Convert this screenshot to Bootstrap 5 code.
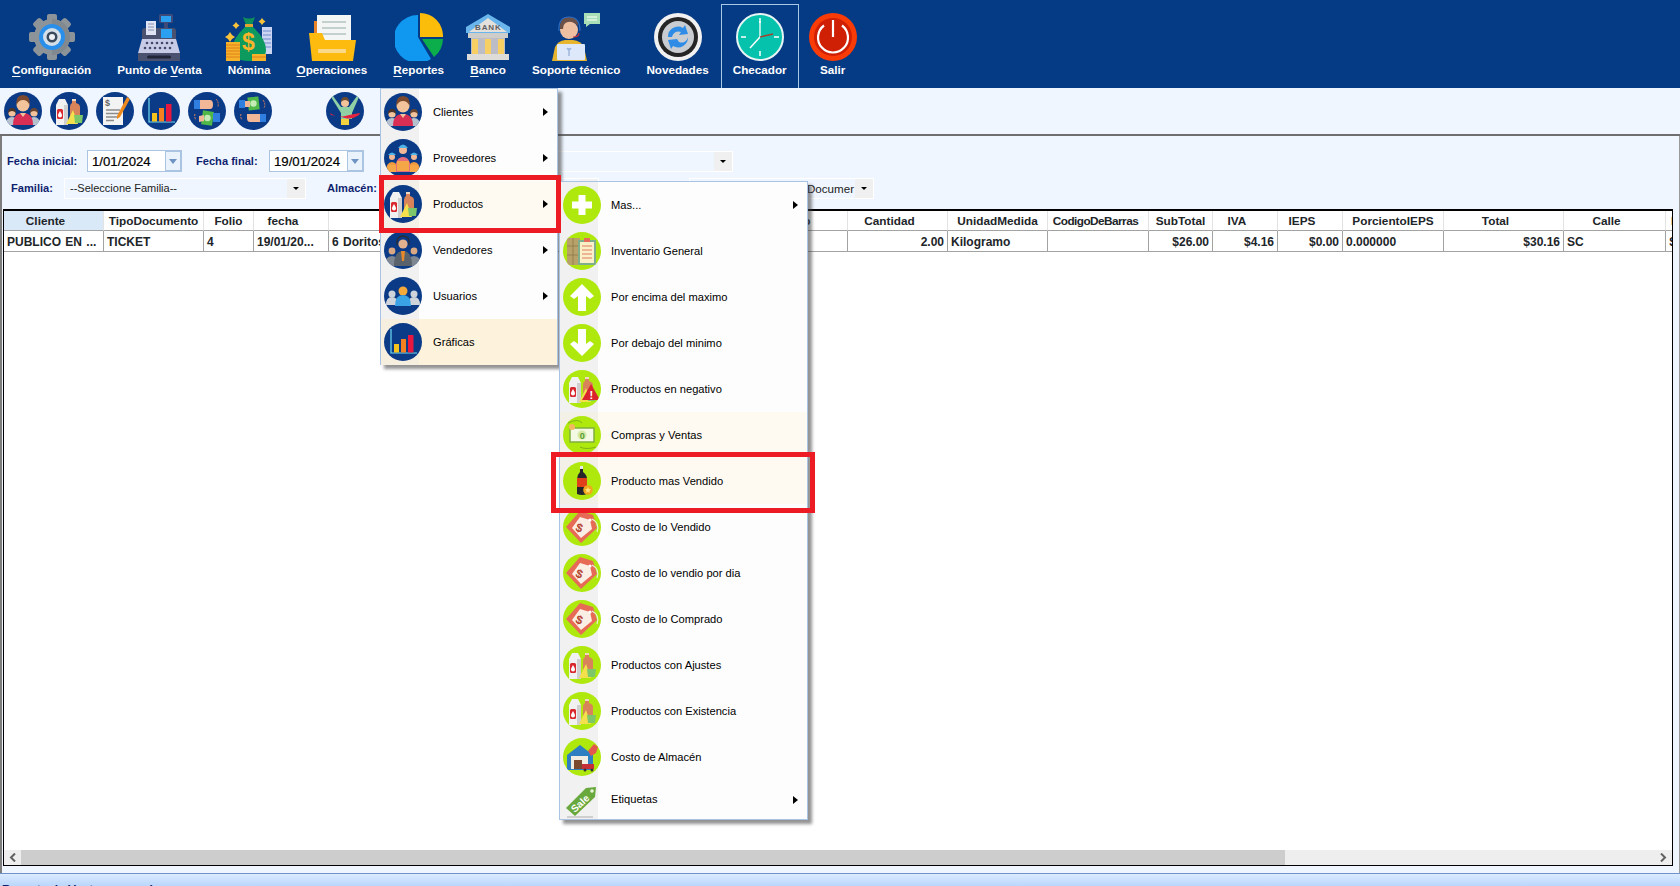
<!DOCTYPE html>
<html lang="es">
<head>
  <meta charset="utf-8">
  <title>Reporte de Ventas general</title>
  <link href="https://cdn.jsdelivr.net/npm/bootstrap@5.3.0/dist/css/bootstrap.min.css" rel="stylesheet">
  <style>
    body {
      width: 1680px;
      height: 886px;
      overflow: hidden;
      background-color: #eff6ff;
      font-family: "Liberation Sans", Arial, sans-serif;
      font-size: 11px;
      color: #000;
    }

    /* top ribbon */
    .ribbon { height: 88px; background-color: #053a85; flex: none; }
    .ribbon-item {
      height: 84px;
      margin-top: 4px;
      padding: 8px 11px 0;
      margin-right: 2px;
      border: 1px solid transparent;
      border-bottom: 0;
      color: #fff;
      font-weight: 700;
      font-size: 11.7px;
      text-decoration: none;
      white-space: nowrap;
    }
    .ribbon-item svg { width: 48px; height: 48px; display: block; margin: 0 -6px 0; flex: none; }
    .ribbon-item svg.wide { width: 60px; }
    .ribbon-item.active { border-color: #a9c8e6; margin-left: -2px; }
    .ribbon-item u { text-underline-offset: 2px; }
    .ribbon-item.salir { margin-left: 2px; }

    /* round icons */
    .rnd { width: 38px; height: 38px; display: block; flex: none; overflow: hidden; }
    .rnd svg { width: 38px; height: 38px; display: block; }
    .navy { background-color: #0b3a87; }
    .lime { background-color: #aee80c; }

    .toolbar { height: 48px; flex: none; padding-left: 4px; gap: 8px; align-items: center; border-bottom: 2px solid #6f6f6f; }
    .toolbar .rnd:nth-child(7) { margin-left: 46px; }

    /* filter panel */
    .workspace { flex: 1 1 auto; min-height: 0; border-left: 2px solid #7d7d7d; border-right: 1px solid #9a9a9a; padding-right: 4px; }
    .filters { height: 73px; flex: none; color: #0f1f70; font-weight: 700; }
    .filter-row { align-items: center; }
    .row-a { height: 22px; margin-top: 14px; }
    .row-b { height: 21px; margin-top: 6px; }
    .lbl-1 { margin-left: 5px; width: 80px; font-size: 11.1px; }
    .lbl-2 { margin-left: 14px; width: 73px; font-size: 11.1px; }
    .lbl-3 { margin-left: 9px; width: 53px; font-size: 11.1px; }
    .lbl-4 { margin-left: 21px; width: 58px; font-size: 11.1px; }
    .date-box { width: 95px; height: 22px; flex-wrap: nowrap; }
    .date-box .form-control {
      padding: 0 0 0 4px;
      font: 400 13.2px "Liberation Sans", Arial, sans-serif;
      -webkit-text-stroke: .2px #000;
      color: #000;
      border: 1px solid #aac4e2;
      border-right: 0;
      border-radius: 0;
      height: 22px;
      min-width: 0;
      box-shadow: none;
    }
    .date-box .input-group-text {
      width: 18px;
      padding: 0;
      justify-content: center;
      background-color: #eaf2fc;
      border: 2px solid #aac4e2;
      border-radius: 0;
    }
    .date-caret { width: 0; height: 0; border-left: 4px solid transparent; border-right: 4px solid transparent; border-top: 5px solid #6f93c2; }
    .combo { height: 21px; border: 1px solid #fff; color: #222; font-weight: 400; font-size: 11px; overflow: hidden; }
    .combo > span:first-child { padding-left: 5px; white-space: nowrap; }
    .combo-btn { width: 18px; background-color: #f0f0f0; flex: none; }
    .combo-btn::after { content: ""; border-left: 3px solid transparent; border-right: 3px solid transparent; border-top: 3px solid #000; }
    .w-familia { width: 242px; }
    .w-almacen { width: 214px; }
    .w-cliente { width: 333px; margin-left: 36px; }
    .w-docum { width: 185px; margin-left: 90px; }
    .w-docum > span:first-child { padding-left: 117px; font-size: 11.6px; }

    /* grid */
    .grid { flex: 1 1 auto; min-height: 0; margin-left: 1px; border: solid #000; border-width: 2px 1px 1px 1px; background: #fff; overflow: hidden; width: 1670px; }
    .grid-body { flex: 1 1 auto; min-height: 0; overflow: hidden; }
    .grid table { table-layout: fixed; width: 1762px; margin: 0; border-collapse: separate; border-spacing: 0; font-size: 12px; }
    .grid th, .grid td { padding: 0 3px; overflow: hidden; white-space: nowrap; background: #fff; line-height: 14px; vertical-align: middle; }
    .grid th { height: 20px; text-align: center; font-weight: 700; font-size: 11.8px; border-right: 1px solid #e3e3e3; border-bottom: 1px solid #a3a3a3; }
    .grid th.sort { padding-right: 19px; }
    .grid th.tight { padding-left: 0; padding-right: 0; }
    .grid th.nudge { padding-right: 13px; }
    .grid th.packed { padding: 0 5px 0 0; letter-spacing: -.55px; }
    .grid th.sel { background-color: #d9e9f7; }
    .grid td { height: 21px; padding-top: 1px; font-weight: 700; word-spacing: 1px; border-right: 1px solid #a3a3a3; border-bottom: 1px solid #a3a3a3; }
    .w-100px { width: 100px; }
    .w-50px { width: 50px; }
    .w-75px { width: 75px; }
    .w-419 { width: 419px; }
    .w-101 { width: 101px; }
    .w-64 { width: 64px; }
    .w-65 { width: 65px; }
    .w-120 { width: 120px; }
    .w-102 { width: 102px; }

    /* scrollbar */
    .hscroll { height: 15px; flex: none; background-color: #eee; }
    .hscroll .arrow { width: 17px; flex: none; }
    .hscroll .arrow svg { width: 7px; height: 9px; display: block; }
    .hscroll .thumb { width: 1264px; background-color: #cdcdcd; flex: none; }

    .gap-bottom { height: 7px; flex: none; }
    .status {
      height: 13px;
      flex: none;
      overflow: hidden;
      border-top: 1px solid #6f93c8;
      background: linear-gradient(#dcebff, #b9d6fb);
      padding: 9px 0 0 2px;
      color: #0f1f70;
      font-weight: 700;
      font-size: 12px;
      line-height: 14px;
    }

    /* context menus */
    .ctx {
      position: absolute;
      z-index: 5;
      padding: 0;
      margin: 0;
      list-style: none;
      background: #fdfdfd;
      border: 1px solid #a9c3e4;
      box-shadow: 4px 4px 3px rgba(60, 60, 60, .55);
    }
    .ctx-1 { left: 380px; top: 88px; width: 178px; height: 277px; }
    .ctx-2 { left: 559px; top: 181px; width: 249px; height: 639px; }
    .ctx li { height: 46px; font-size: 11.15px; color: #000; padding-left: 3px; background: linear-gradient(90deg, #f1f1f1 38px, transparent 38px); }
    .ctx li .rnd { margin-right: 11px; }
    .ctx-2 li .rnd { margin-right: 10px; }
    .ctx li.soft { background: linear-gradient(90deg, #f3f0e8 38px, #fefaf1 38px); }
    .ctx li.warm { background: linear-gradient(90deg, #f6efdf 38px, #fdf3dc 38px); }
    .ctx li.last { height: 39px; }
    .tri { width: 0; height: 0; border-top: 4px solid transparent; border-bottom: 4px solid transparent; border-left: 5px solid #000; margin-left: auto; margin-right: 9px; }

    /* annotation boxes */
    .redbox { position: absolute; z-index: 6; border: 5px solid #ed1c24; pointer-events: none; }
    .redbox-1 { left: 379px; top: 175px; width: 182px; height: 58px; }
    .redbox-2 { left: 551px; top: 452px; width: 264px; height: 61px; }
    svg text { font-family: "Liberation Sans", Arial, sans-serif; font-weight: 700; }
  </style>
</head>
<body class="d-flex flex-column position-relative">

  <!-- shared icon shapes -->
  <svg width="0" height="0" class="position-absolute">
    <defs>
      <symbol id="person" viewBox="0 0 38 38">
        <circle cx="19" cy="13" r="6.500" fill="#f3c49b"/>
        <path d="M12.500 13q-1-10 6.500-10t6.500 10q-2-5-6.500-5t-6.500 5z" fill="#7b4a2e"/>
        <path d="M9 33q0-12 10-12t10 12z" fill="#d92f55"/>
      </symbol>
      <symbol id="clients" viewBox="0 0 38 38">
        <circle cx="8" cy="21" r="3.600" fill="#f3c49b"/><path d="M4 21q0-5 4-5t4 5q-2-2-4-2t-4 2z" fill="#4d3427"/>
        <circle cx="30" cy="21" r="3.600" fill="#f3c49b"/><path d="M26 21q0-5 4-5t4 5q-2-2-4-2t-4 2z" fill="#6a4630"/>
        <path d="M2 33q0-8 6-8t6 8zM24 33q0-8 6-8t6 8z" fill="#b6c1cf"/>
        <use href="#person" width="38" height="38"/>
        <path d="M16 21l3 4 3-4z" fill="#f3c49b"/>
      </symbol>
      <symbol id="products" viewBox="0 0 38 38">
        <path d="M22 7h4v4q4 1 4 4v9H20v-9q0-3 2-4z" fill="#d9835a"/><path d="M22 7h4v2h-4z" fill="#f0d9c4"/>
        <path d="M6 13l3-6h6l3 6v20H6z" fill="#f1f1f1"/>
        <path d="M14 13h4v20h-4z" fill="#cfcfcf"/>
        <rect x="7" y="17" width="6" height="10" rx="1.500" fill="#d8272d"/>
        <path d="M10 19q2 3 2 4.500a2 2 0 0 1-4 0q0-1.500 2-4.500z" fill="#fff"/>
        <path d="M23 18l5 14H16z" fill="#f4e04d"/>
        <path d="M24 23h9l-1 8h-7z" fill="#7dc76a"/>
      </symbol>
      <symbol id="invoice" viewBox="0 0 38 38">
        <path d="M7 5h20v28H7z" fill="#f3f3f3"/>
        <text x="9" y="14" font-size="9" fill="#666">$</text>
        <path d="M10 18h14M10 21.500h14M10 25h11M10 28.500h8" stroke="#8c8c8c" stroke-width="1.300"/>
        <path d="M31 5l3 2-10 18-3 2 0-3z" fill="#ee8a1d"/>
      </symbol>
      <symbol id="chart" viewBox="0 0 38 38">
        <path d="M7 6v24h26" fill="none" stroke="#6fdcf2" stroke-width="1.200"/>
        <rect x="10" y="21" width="5" height="8.500" fill="#f6c21c"/>
        <rect x="17" y="16" width="5" height="13.500" fill="#f5801f"/>
        <rect x="24" y="12" width="5.500" height="17.500" fill="#e8173f"/>
      </symbol>
      <symbol id="swap" viewBox="0 0 38 38">
        <path d="M6 8h6v9H6z" fill="#2f7fe0"/><path d="M12 8h10q3 0 3 4.500T22 17H12z" fill="#f2b796"/>
        <path d="M14 19h11v14H14z" fill="#4fb848" transform="rotate(8 19 26)"/><circle cx="19.500" cy="26" r="3.200" fill="#c5ecb6"/>
        <path d="M25 21h7v9h-7z" fill="#2f7fe0"/>
        <path d="M11 24l5-1v6l-5 1z" fill="#f2b796"/>
        <path d="M28 7q3 3 2 8M7 22q-1 3 1 6" stroke="#d9825f" stroke-width="1" fill="none" stroke-dasharray="2 1"/>
      </symbol>
      <symbol id="swap2" viewBox="0 0 38 38">
        <path d="M14 5h11v13H14z" fill="#4fb848" transform="rotate(-6 19 11)"/><circle cx="19.500" cy="11.500" r="3.200" fill="#c5ecb6"/>
        <path d="M5 8h6v8H5z" fill="#2f7fe0"/><path d="M11 9h5v6h-5z" fill="#f2b796"/>
        <path d="M26 22h6v8h-6z" fill="#2f7fe0"/><path d="M13 22h13v8H16q-3 0-3-4z" fill="#f2b796"/>
        <path d="M29 8q3 4 1 8M7 22q-1 3 1 6" stroke="#d9825f" stroke-width="1" fill="none" stroke-dasharray="2 1"/>
      </symbol>
      <symbol id="winner" viewBox="0 0 38 38">
        <path d="M7 4l8 11h8l8-11 2 1-7 16v6H15v-6L5 5z" fill="#8fd0a4"/>
        <circle cx="19" cy="11" r="4" fill="#f2c29a"/><path d="M15 10q0-5 4-5t4 5q-2-2-4-2t-4 2z" fill="#6d4a2e"/>
        <path d="M4 21q7 5 15 3t15-3l-1 2q-7 5-14 3T5 23z" fill="#e4233f"/>
        <path d="M15 27h8v6h-8z" fill="#f3d23f"/>
      </symbol>
      <symbol id="suppliers" viewBox="0 0 38 38">
        <circle cx="8" cy="18" r="3" fill="#f2b796"/><circle cx="30" cy="18" r="3" fill="#f2b796"/>
        <path d="M4 16q4-5 8 0zM26 16q4-5 8 0z" fill="#4fb3e8"/>
        <path d="M2 33q0-10 6-10t6 10zM24 33q0-10 6-10t6 10z" fill="#f09a3e"/>
        <circle cx="19" cy="11" r="4" fill="#f2b796"/><path d="M14 9q5-7 10 0z" fill="#4fb3e8"/>
        <path d="M11 33q0-15 8-15t8 15z" fill="#e56c7c"/><rect x="13" y="22" width="12" height="10" fill="#f5a748"/>
        <rect x="4" y="26" width="8" height="7" fill="#f5a748"/><rect x="26" y="26" width="8" height="7" fill="#f5a748"/>
      </symbol>
      <symbol id="sellers" viewBox="0 0 38 38">
        <circle cx="8" cy="20" r="3.400" fill="#d9a883"/><circle cx="30" cy="20" r="3.400" fill="#d9a883"/>
        <path d="M1 35q0-10 7-10t7 10zM23 35q0-10 7-10t7 10z" fill="#7e8791"/>
        <circle cx="19" cy="13" r="4.600" fill="#e2b28e"/>
        <path d="M13 14q-1-9 6-9t6 9" fill="none" stroke="#2c2c2c" stroke-width="1.300"/>
        <path d="M10 35q0-15 9-15t9 15z" fill="#5a626b"/><path d="M17 20h4l-1 10h-2z" fill="#e88a2b"/>
      </symbol>
      <symbol id="users" viewBox="0 0 38 38">
        <circle cx="8" cy="17" r="3.500" fill="#cfd4da"/><circle cx="30" cy="17" r="3.500" fill="#cfd4da"/>
        <path d="M2 28q0-8 6-8t6 8zM24 28q0-8 6-8t6 8z" fill="#cfd4da"/>
        <circle cx="19" cy="14" r="4.500" fill="#f6a93b"/>
        <path d="M11 29q0-11 8-11t8 11z" fill="#39a3e6"/>
      </symbol>
      <symbol id="inventory" viewBox="0 0 38 38">
        <path d="M4 6h13v27H4z" fill="#b9a26a"/><path d="M4 14h13M4 23h13M10 6v27" stroke="#8c7a4c" stroke-width=".8"/>
        <path d="M15 8h18v25H15z" fill="#7fae8e"/><path d="M17 10h14v21H17z" fill="#f9f0c8"/>
        <path d="M21 6h6v4h-6z" fill="#e26b5a"/>
        <path d="M19 14h10M19 18h10M19 22h10M19 26h10" stroke="#e37b61" stroke-width="1"/>
      </symbol>
      <symbol id="plus" viewBox="0 0 38 38"><path d="M15.500 9h7v6.500H29v7h-6.500V29h-7v-6.500H9v-7h6.500z" fill="#fff"/></symbol>
      <symbol id="up" viewBox="0 0 38 38"><path d="M19 6l12 12-4 3-4-3v15h-8V18l-4 3-4-3z" fill="#fff"/></symbol>
      <symbol id="down" viewBox="0 0 38 38"><path d="M19 32L7 20l4-3 4 3V5h8v15l4-3 4 3z" fill="#fff"/></symbol>
      <symbol id="cash" viewBox="0 0 38 38">
        <rect x="7" y="12" width="24" height="14" fill="#f4f9e4" stroke="#7fae3c" stroke-width="1.500"/>
        <circle cx="19" cy="19" r="4.500" fill="#d5e8a6"/>
        <text x="16.800" y="22.500" font-size="9" fill="#5a9e2f">0</text>
        <circle cx="9" cy="11" r="3" fill="#f4b860"/>
        <path d="M5 7q10-5 14 0M33 31q-10 3-16 0" stroke="#6b9c1e" stroke-width=".7" fill="none"/>
      </symbol>
      <symbol id="cola" viewBox="0 0 38 38">
        <path d="M17 4h3v6q4 3 4 7v15q-5 2-10 0V17q0-4 3-7z" fill="#24262a"/>
        <path d="M14 16h10v9H14z" fill="#e2401b"/><path d="M17 4h3v3h-3z" fill="#e8e8e8"/>
        <circle cx="25" cy="28" r="4.800" fill="#f2a81d"/><path d="M25 25l1 2 2 .3-1.500 1.400.4 2-1.900-1-1.900 1 .4-2L22 27.300l2-.3z" fill="#ffe27a"/>
      </symbol>
      <symbol id="tag" viewBox="0 0 38 38">
        <path d="M17 3l13 4 4 13-16 15L3 19z" fill="#e76a57"/>
        <path d="M17 9l10 3 2 9-11 9-9-10z" fill="#fbeee4"/>
        <text x="13" y="24" font-size="12" fill="#b5422f" transform="rotate(20 17 20)">$</text>
        <circle cx="27" cy="12" r="1.600" fill="#fff"/>
        <path d="M29 11q8 4 5 13" stroke="#e7f2d5" stroke-width="1.200" fill="none"/>
      </symbol>
      <symbol id="warehouse" viewBox="0 0 38 38">
        <path d="M4 17L17 7l13 10v15H4z" fill="#2d7fc1"/>
        <rect x="8" y="18" width="17" height="13" fill="#f1ede2"/>
        <rect x="11" y="22" width="8" height="9" fill="#7b4a2e"/>
        <path d="M19 26h12v5H19z" fill="#c62f37"/><circle cx="22" cy="32" r="1.500" fill="#333"/><circle cx="29" cy="32" r="1.500" fill="#333"/>
        <path d="M25 13l6-7 4 3-2 6-5 3z" fill="#e2584f"/>
      </symbol>
      <symbol id="warn" viewBox="0 0 38 38">
        <use href="#products" width="38" height="38"/>
        <path d="M28 14l9 16H19z" fill="#d9232e"/>
        <text x="26.500" y="28.500" font-size="11" fill="#fff">!</text>
      </symbol>
    </defs>
  </svg>

  <!-- ribbon -->
  <nav class="ribbon d-flex align-items-start">
    <a class="ribbon-item d-flex flex-column align-items-center" href="#">
      <svg viewBox="0 0 48 48">
        <g fill="#8d9499">
          <circle cx="24" cy="24" r="18"/>
          <rect x="19" y="1" width="10" height="46" rx="2"/>
          <rect x="19" y="1" width="10" height="46" rx="2" transform="rotate(45 24 24)"/>
          <rect x="19" y="1" width="10" height="46" rx="2" transform="rotate(90 24 24)"/>
          <rect x="19" y="1" width="10" height="46" rx="2" transform="rotate(135 24 24)"/>
        </g>
        <path d="M24 6a18 18 0 0 1 0 36z" fill="#7a8187" opacity=".6"/>
        <circle cx="24" cy="24" r="13" fill="#2a8fea"/>
        <circle cx="24" cy="24" r="9" fill="#d5dfe8"/>
        <circle cx="24" cy="24" r="5.500" fill="#3a4a5c"/>
        <circle cx="24" cy="24" r="3" fill="#eef2f6"/>
      </svg>
      <span><u>C</u>onfiguración</span>
    </a>
    <a class="ribbon-item d-flex flex-column align-items-center" href="#">
      <svg viewBox="0 0 48 48">
        <rect x="24" y="1" width="14" height="9" rx="1.500" fill="#3f4a78"/><rect x="26" y="3" width="10" height="6" fill="#2ba0f0"/>
        <path d="M29 10h4v8h-4z" fill="#3f4a78"/>
        <path d="M7 18q0-3 3-3h28q3 0 3 3v9H7z" fill="#4a5270"/>
        <path d="M11 8h10v14H11z" fill="#dfe4f4"/><path d="M13 11h6M13 14h6M13 17h6" stroke="#8a90ac" stroke-width="1"/>
        <rect x="26" y="16" width="11" height="9" fill="#2ba0f0"/>
        <path d="M7 26h34l4 14H3z" fill="#c7cbe6"/>
        <g fill="#43486a"><circle cx="12" cy="30" r="1.300"/><circle cx="17" cy="30" r="1.300"/><circle cx="22" cy="30" r="1.300"/><circle cx="27" cy="30" r="1.300"/><circle cx="32" cy="30" r="1.300"/><circle cx="37" cy="30" r="1.300"/><circle cx="10" cy="35" r="1.300"/><circle cx="15" cy="35" r="1.300"/><circle cx="20" cy="35" r="1.300"/><circle cx="25" cy="35" r="1.300"/><circle cx="30" cy="35" r="1.300"/><circle cx="35" cy="35" r="1.300"/></g>
        <rect x="3" y="40" width="42" height="8" fill="#4a5270"/><rect x="12" y="42.500" width="24" height="3" rx="1.500" fill="#202538"/>
      </svg>
      <span>Punto de <u>V</u>enta</span>
    </a>
    <a class="ribbon-item d-flex flex-column align-items-center" href="#">
      <svg viewBox="0 0 48 48">
        <path d="M37 14h10v27H37z" fill="#c9d5f3"/><path d="M38 18h8M38 22h8M38 26h8M38 30h8M38 34h8" stroke="#6f8bd0" stroke-width="1"/>
        <path d="M18 4q6 3 12 0l-3 8h-6z" fill="#0d8f5a"/><path d="M20 11h8v3h-8z" fill="#e1a233"/>
        <path d="M20 14h8q13 12 13 23 0 11-17 11T7 37q0-11 13-23z" fill="#0d9a5f"/>
        <text x="17" y="37" font-size="23" fill="#f6b42b">$</text>
        <rect x="1" y="29" width="14" height="19" fill="#f5b32a"/><path d="M1 32h14M1 35h14M1 38h14M1 41h14M1 44h14" stroke="#e07e1c" stroke-width="1"/>
        <rect x="27" y="41" width="14" height="7" fill="#f5b32a"/><path d="M27 44h14" stroke="#e07e1c" stroke-width="1"/>
        <path d="M5 19l2 3 3 2-3 2-2 3-2-3-3-2 3-2zM11 9l1.500 2 2 1.500-2 1.500-1.500 2-1.500-2-2-1.500 2-1.500zM37 5l1.500 2 2 1.500-2 1.500-1.500 2-1.500-2-2-1.500 2-1.500z" fill="#f8c33a"/>
      </svg>
      <span>Nómina</span>
    </a>
    <a class="ribbon-item d-flex flex-column align-items-center" href="#">
      <svg viewBox="0 0 48 48">
        <path d="M6 8h37v24H6z" fill="#e8832a"/>
        <path d="M9 2h34v30H9z" fill="#f4f5f5"/>
        <path d="M14 9h24M14 15h24M14 21h24" stroke="#c3d0ce" stroke-width="2"/>
        <path d="M1 20h13l3 7h31l-3 21H4z" fill="#fdbb0f"/>
        <rect x="10" y="36" width="28" height="4" rx="1" fill="#fbd98a"/>
      </svg>
      <span><u>O</u>peraciones</span>
    </a>
    <a class="ribbon-item d-flex flex-column align-items-center" href="#">
      <svg viewBox="0 0 48 48">
        <path d="M23 24V2a24 24 0 1 0 13 44z" fill="#1097ef"/>
        <path d="M25 0a23 23 0 0 1 23 24H25z" fill="#fcbc0a"/>
        <path d="M27 26h21a24 24 0 0 1-9 18z" fill="#0cae4c"/>
      </svg>
      <span><u>R</u>eportes</span>
    </a>
    <a class="ribbon-item d-flex flex-column align-items-center" href="#">
      <svg viewBox="0 0 48 48">
        <path d="M24 1l22 13v6H2v-6z" fill="#69b5ec"/><path d="M24 5l19 14H5z" fill="#e4e1dc"/>
        <text x="11" y="17" font-size="8" letter-spacing=".9" fill="#5f5f63">BANK</text>
        <rect x="4" y="20" width="40" height="5" fill="#cfcdc9"/>
        <rect x="7" y="25" width="34" height="16" fill="#bdbdc7"/>
        <path d="M8 26h6v15H8zM21 26h6v15h-6zM34 26h6v15h-6z" fill="#f7cf63"/>
        <rect x="3" y="41" width="42" height="6" fill="#dedcd8"/>
      </svg>
      <span><u>B</u>anco</span>
    </a>
    <a class="ribbon-item d-flex flex-column align-items-center" href="#">
      <svg class="wide" viewBox="0 0 60 48">
        <path d="M38 0h16v11H44l-4 3v-3h-2z" fill="#a9dfb6"/><path d="M41 4h10M41 7h10" stroke="#fff" stroke-width="1"/>
        <path d="M6 48l3-14q3-6 10-7h8q8 1 11 7l3 14z" fill="#e8b52f"/>
        <rect x="11" y="31" width="28" height="16" rx="1" fill="#dde8fb"/>
        <circle cx="23" cy="17" r="9" fill="#efbfa2"/>
        <path d="M14 16q-1-12 9-12t9 9q-5-5-10-4t-5 7z" fill="#6c5148"/>
        <path d="M13 18q-1-14 10-14t11 14" fill="none" stroke="#2f6dc1" stroke-width="1.200"/>
        <path d="M33 20q0 4-6 4" fill="none" stroke="#c33" stroke-width="1.200"/>
        <path d="M23 35v8M21 35q2 4 4 0" stroke="#9fb6dd" stroke-width="1.500" fill="none"/>
      </svg>
      <span>Soporte técnico</span>
    </a>
    <a class="ribbon-item d-flex flex-column align-items-center" href="#">
      <svg viewBox="0 0 48 48">
        <circle cx="24" cy="24" r="24" fill="#f1f1f1"/>
        <circle cx="24" cy="24" r="20" fill="#252525"/>
        <circle cx="24" cy="24" r="16" fill="#c9ccd0"/>
        <path d="M14 24a10 10 0 0 1 15-9l2-3 3 9-9 1 2-3a6.500 6.500 0 0 0-9 5z" fill="#2f8ce6"/>
        <path d="M34 24a10 10 0 0 1-15 9l-2 3-3-9 9-1 2 3a6.500 6.500 0 0 0 9-5z" fill="#2f8ce6"/>
      </svg>
      <span>Novedades</span>
    </a>
    <a class="ribbon-item active d-flex flex-column align-items-center" href="#">
      <svg viewBox="0 0 48 48">
        <circle cx="24" cy="24" r="23" fill="#05c2ac" stroke="#e7f4f4" stroke-width="2"/>
        <path d="M24 5v5M24 38v5M5 24h5M38 24h5" stroke="#fff" stroke-width="1.500"/>
        <path d="M24 24V8" stroke="#fff" stroke-width="1.300"/>
        <path d="M24 24L14 35" stroke="#fff" stroke-width="1.500"/>
        <path d="M24 24l13-3" stroke="#a8402c" stroke-width="1.300"/>
      </svg>
      <span>Checador</span>
    </a>
    <a class="ribbon-item salir d-flex flex-column align-items-center" href="#">
      <svg viewBox="0 0 48 48">
        <circle cx="24" cy="24" r="24" fill="#f93b07"/>
        <circle cx="24" cy="24" r="19" fill="#cf1f05"/>
        <path d="M15 12.500a15 15 0 1 0 18 0" fill="none" stroke="#fff" stroke-width="2.200"/>
        <path d="M24 7v17" stroke="#fff" stroke-width="2.200"/>
      </svg>
      <span>Salir</span>
    </a>
  </nav>

  <!-- round shortcuts -->
  <div class="toolbar d-flex">
    <span class="rnd navy rounded-circle"><svg viewBox="0 0 38 38"><use href="#clients"/></svg></span>
    <span class="rnd navy rounded-circle"><svg viewBox="0 0 38 38"><use href="#products"/></svg></span>
    <span class="rnd navy rounded-circle"><svg viewBox="0 0 38 38"><use href="#invoice"/></svg></span>
    <span class="rnd navy rounded-circle"><svg viewBox="0 0 38 38"><use href="#chart"/></svg></span>
    <span class="rnd navy rounded-circle"><svg viewBox="0 0 38 38"><use href="#swap"/></svg></span>
    <span class="rnd navy rounded-circle"><svg viewBox="0 0 38 38"><use href="#swap2"/></svg></span>
    <span class="rnd navy rounded-circle"><svg viewBox="0 0 38 38"><use href="#winner"/></svg></span>
  </div>

  <div class="workspace d-flex flex-column">
    <div class="filters">
      <div class="filter-row row-a d-flex">
        <span class="lbl-1">Fecha inicial:</span>
        <div class="input-group date-box">
          <input class="form-control" type="text" value="1/01/2024">
          <span class="input-group-text"><span class="date-caret"></span></span>
        </div>
        <span class="lbl-2">Fecha final:</span>
        <div class="input-group date-box">
          <input class="form-control" type="text" value="19/01/2024">
          <span class="input-group-text"><span class="date-caret"></span></span>
        </div>
        <div class="combo w-cliente d-flex justify-content-between">
          <span></span>
          <span class="combo-btn d-flex align-items-center justify-content-center"></span>
        </div>
      </div>
      <div class="filter-row row-b d-flex">
        <span class="lbl-3">Familia:</span>
        <div class="combo w-familia d-flex justify-content-between align-items-stretch">
          <span class="d-flex align-items-center">--Seleccione Familia--</span>
          <span class="combo-btn d-flex align-items-center justify-content-center"></span>
        </div>
        <span class="lbl-4">Almacén:</span>
        <div class="combo w-almacen d-flex justify-content-between">
          <span></span>
          <span class="combo-btn d-flex align-items-center justify-content-center"></span>
        </div>
        <div class="combo w-docum d-flex justify-content-between">
          <span class="d-flex align-items-center">Documer</span>
          <span class="combo-btn d-flex align-items-center justify-content-center"></span>
        </div>
      </div>
    </div>

    <div class="grid d-flex flex-column">
      <div class="grid-body">
        <table class="table table-sm">
          <colgroup>
            <col class="w-100px"><col class="w-100px"><col class="w-50px"><col class="w-75px"><col class="w-419"><col class="w-100px">
            <col class="w-100px"><col class="w-100px"><col class="w-101"><col class="w-64"><col class="w-65"><col class="w-65">
            <col class="w-101"><col class="w-120"><col class="w-102"><col class="w-100px">
          </colgroup>
          <thead>
            <tr>
              <th class="sort sel">Cliente</th><th class="tight">TipoDocumento</th><th>Folio</th><th class="sort">fecha</th>
              <th>Producto</th><th class="nudge">Precio</th><th class="sort">Cantidad</th><th class="tight">UnidadMedida</th>
              <th class="packed">CodigoDeBarras</th><th class="tight">SubTotal</th><th class="sort">IVA</th><th class="sort">IEPS</th>
              <th class="tight">PorcientoIEPS</th><th class="sort">Total</th><th class="sort">Calle</th><th class="tight">NumeroExterior</th>
            </tr>
          </thead>
          <tbody>
            <tr>
              <td>PUBLICO EN ...</td><td>TICKET</td><td>4</td><td>19/01/20...</td>
              <td>6 Doritos</td><td></td><td class="text-end">2.00</td><td>Kilogramo</td>
              <td></td><td class="text-end">$26.00</td><td class="text-end">$4.16</td><td class="text-end">$0.00</td>
              <td>0.000000</td><td class="text-end">$30.16</td><td>SC</td><td>SN</td>
            </tr>
          </tbody>
        </table>
      </div>
      <div class="hscroll d-flex align-items-center">
        <span class="arrow d-flex justify-content-center"><svg viewBox="0 0 7 9"><path d="M6 .5L2 4.500l4 4" fill="none" stroke="#606060" stroke-width="2"/></svg></span>
        <span class="thumb align-self-stretch"></span>
        <span class="arrow ms-auto d-flex justify-content-center"><svg viewBox="0 0 7 9"><path d="M1 .5l4 4-4 4" fill="none" stroke="#606060" stroke-width="2"/></svg></span>
      </div>
    </div>
    <div class="gap-bottom"></div>
  </div>

  <div class="status">Reporte de Ventas general</div>

  <!-- first menu -->
  <ul class="ctx ctx-1">
    <li class="d-flex align-items-center"><span class="rnd navy rounded-circle"><svg viewBox="0 0 38 38"><use href="#clients"/></svg></span>Clientes<span class="tri"></span></li>
    <li class="d-flex align-items-center"><span class="rnd navy rounded-circle"><svg viewBox="0 0 38 38"><use href="#suppliers"/></svg></span>Proveedores<span class="tri"></span></li>
    <li class="d-flex align-items-center soft"><span class="rnd navy rounded-circle"><svg viewBox="0 0 38 38"><use href="#products"/></svg></span>Productos<span class="tri"></span></li>
    <li class="d-flex align-items-center"><span class="rnd navy rounded-circle"><svg viewBox="0 0 38 38"><use href="#sellers"/></svg></span>Vendedores<span class="tri"></span></li>
    <li class="d-flex align-items-center"><span class="rnd navy rounded-circle"><svg viewBox="0 0 38 38"><use href="#users"/></svg></span>Usuarios<span class="tri"></span></li>
    <li class="d-flex align-items-center warm"><span class="rnd navy rounded-circle"><svg viewBox="0 0 38 38"><use href="#chart"/></svg></span>Gráficas</li>
  </ul>

  <!-- second menu -->
  <ul class="ctx ctx-2">
    <li class="d-flex align-items-center"><span class="rnd lime rounded-circle"><svg viewBox="0 0 38 38"><use href="#plus"/></svg></span>Mas...<span class="tri"></span></li>
    <li class="d-flex align-items-center"><span class="rnd lime rounded-circle"><svg viewBox="0 0 38 38"><use href="#inventory"/></svg></span>Inventario General</li>
    <li class="d-flex align-items-center"><span class="rnd lime rounded-circle"><svg viewBox="0 0 38 38"><use href="#up"/></svg></span>Por encima del maximo</li>
    <li class="d-flex align-items-center"><span class="rnd lime rounded-circle"><svg viewBox="0 0 38 38"><use href="#down"/></svg></span>Por debajo del minimo</li>
    <li class="d-flex align-items-center"><span class="rnd lime rounded-circle"><svg viewBox="0 0 38 38"><use href="#warn"/></svg></span>Productos en negativo</li>
    <li class="d-flex align-items-center soft"><span class="rnd lime rounded-circle"><svg viewBox="0 0 38 38"><use href="#cash"/></svg></span>Compras y Ventas</li>
    <li class="d-flex align-items-center soft"><span class="rnd lime rounded-circle"><svg viewBox="0 0 38 38"><use href="#cola"/></svg></span>Producto mas Vendido</li>
    <li class="d-flex align-items-center"><span class="rnd lime rounded-circle"><svg viewBox="0 0 38 38"><use href="#tag"/></svg></span>Costo de lo Vendido</li>
    <li class="d-flex align-items-center"><span class="rnd lime rounded-circle"><svg viewBox="0 0 38 38"><use href="#tag"/></svg></span>Costo de lo vendio por dia</li>
    <li class="d-flex align-items-center"><span class="rnd lime rounded-circle"><svg viewBox="0 0 38 38"><use href="#tag"/></svg></span>Costo de lo Comprado</li>
    <li class="d-flex align-items-center"><span class="rnd lime rounded-circle"><svg viewBox="0 0 38 38"><use href="#products"/></svg></span>Productos con Ajustes</li>
    <li class="d-flex align-items-center"><span class="rnd lime rounded-circle"><svg viewBox="0 0 38 38"><use href="#products"/></svg></span>Productos con Existencia</li>
    <li class="d-flex align-items-center"><span class="rnd lime rounded-circle"><svg viewBox="0 0 38 38"><use href="#warehouse"/></svg></span>Costo de Almacén</li>
    <li class="d-flex align-items-center last">
      <span class="rnd"><svg viewBox="0 0 38 38">
        <path d="M3 27L23 7l10-1-1 10-20 19z" fill="#69a83c"/>
        <circle cx="29" cy="10" r="1.800" fill="#eaf5dc"/>
        <text x="8" y="28" font-size="10" fill="#fff" transform="rotate(-42 15 25)">Sale</text>
        <path d="M4 36h26" stroke="#b9b9b9" stroke-width="1.200"/>
      </svg></span>Etiquetas<span class="tri"></span>
    </li>
  </ul>

  <div class="redbox redbox-1"></div>
  <div class="redbox redbox-2"></div>

  <script src="https://cdn.jsdelivr.net/npm/bootstrap@5.3.0/dist/js/bootstrap.bundle.min.js"></script>
</body>
</html>
